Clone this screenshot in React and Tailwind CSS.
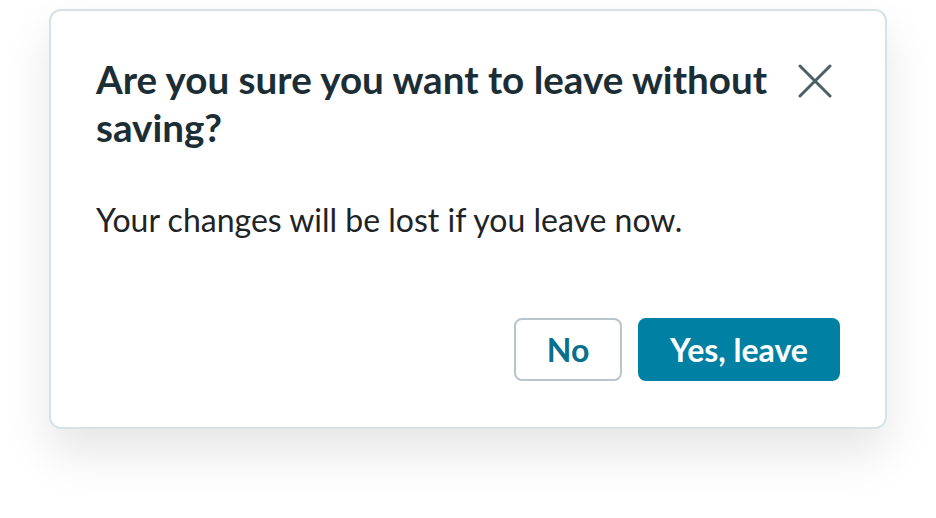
export default function App() {
  return (
    <div className="w-[936px] h-[518px] bg-white" style={{ fontFamily: "Lato, 'Noto Sans', sans-serif" }}>
      <div className="pt-[9px] pl-[49px]">
        <div className="w-[838px] h-[420px] rounded-[12px] border-2 border-[#d8e2e6] bg-white shadow-[0_24px_48px_rgba(0,0,0,0.10)] flex flex-col">
          <div className="flex items-start justify-between pl-[45px] pr-[52px] pt-[44px]">
            <h2 className="text-[38.6px] leading-[48px] font-bold text-[#1b2d35] w-[690px]">
              Are you sure you want to leave without saving?
            </h2>
            <button className="mt-[8px] w-[36px] h-[36px] flex items-center justify-center">
              <svg width="34" height="34" viewBox="0 0 34 34" fill="none" stroke="#4b5f67" strokeWidth="3" strokeLinecap="round">
                <path d="M2 2L32 32M32 2L2 32" />
              </svg>
            </button>
          </div>
          <p className="pl-[45px] mt-[49px] text-[32px] leading-[40px] text-[#1e2426]">
            Your changes will be lost if you leave now.
          </p>
          <div className="flex justify-end gap-[16px] pr-[45px] mt-auto mb-[46px]">
            <button className="w-[108px] h-[63px] rounded-[8px] border-2 border-[#b8c6cc] text-[32px] font-bold text-[#08708c]">
              No
            </button>
            <button className="w-[202px] h-[63px] rounded-[8px] bg-[#0081a3] text-[32px] font-bold text-white">
              Yes, leave
            </button>
          </div>
        </div>
      </div>
    </div>
  );
}
